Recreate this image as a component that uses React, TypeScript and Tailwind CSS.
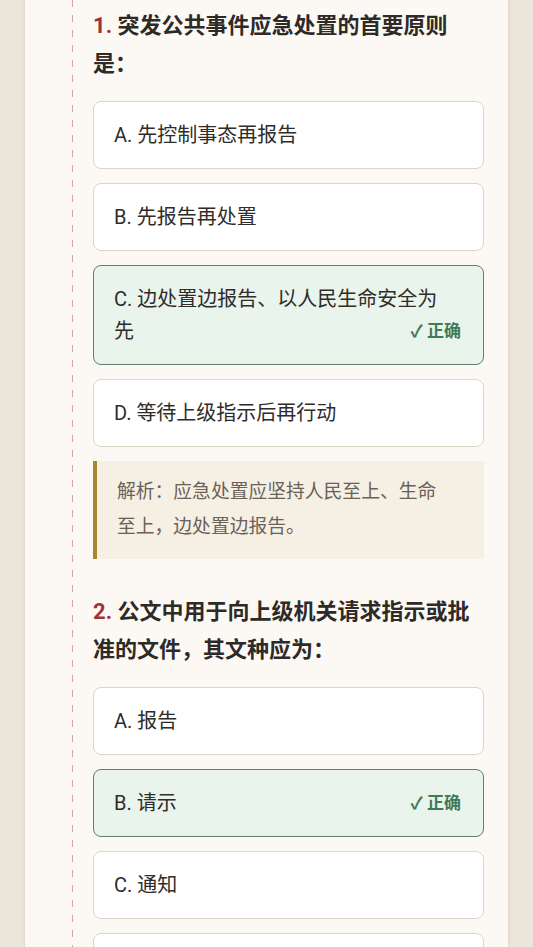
import React from "react";

type Option = { label: string; text: string; correct?: boolean };
type Question = { no: number; title: string; options: Option[]; analysis?: string };

const questions: Question[] = [
  {
    no: 1,
    title: "突发公共事件应急处置的首要原则是：",
    options: [
      { label: "A", text: "先控制事态再报告" },
      { label: "B", text: "先报告再处置" },
      { label: "C", text: "边处置边报告、以人民生命安全为先", correct: true },
      { label: "D", text: "等待上级指示后再行动" },
    ],
    analysis: "解析：应急处置应坚持人民至上、生命至上，边处置边报告。",
  },
  {
    no: 2,
    title: "公文中用于向上级机关请求指示或批准的文件，其文种应为：",
    options: [
      { label: "A", text: "报告" },
      { label: "B", text: "请示", correct: true },
      { label: "C", text: "通知" },
      { label: "D", text: "函" },
    ],
  },
];

const OptionCard: React.FC<{ opt: Option }> = ({ opt }) => (
  <div
    className={
      opt.correct
        ? "relative rounded-lg border border-[#5f8069] bg-[#e9f4ec] py-[17px] pl-[20px] pr-[28px]"
        : "relative rounded-lg border border-[#ddd5c8] bg-white py-[17px] pl-[20px] pr-[28px]"
    }
  >
    <p className="text-[20px] leading-8 text-[#2f2c29]">
      {opt.label}. {opt.text}
    </p>
    {/* correct answer mark, sits on the last line */}
    {opt.correct && (
      <span className="absolute bottom-[17px] right-[22px] text-[17px] font-bold leading-8 text-[#3f7a57]">
        ✓ 正确
      </span>
    )}
  </div>
);

const App: React.FC = () => {
  return (
    <div
      className="h-[947px] overflow-hidden bg-[#ece5d9] px-[25px]"
      style={{ fontFamily: "Roboto, 'Noto Sans CJK SC', sans-serif" }}
    >
      <div className="flex h-full bg-[#fcf9f4] shadow-[0_0_3px_rgba(120,100,70,0.18)]">
        <div className="w-[47px] shrink-0" />
        {/* margin line */}
        <div className="w-px shrink-0 bg-[linear-gradient(to_bottom,#dba2a4_0_7px,transparent_7px_15px)] bg-[length:1px_15px]" />
        <div className="ml-[20px] mr-[24px] flex flex-1 flex-col gap-[34px] pt-[7px]">
          {questions.map((q) => (
            <div key={q.no}>
              <h2 className="mb-[18px] text-[22px] font-bold leading-[38px] text-[#2e2a27]">
                <span className="text-[#a3323a]">{q.no}.</span> {q.title}
              </h2>
              <div className="flex flex-col gap-[14px]">
                {q.options.map((o) => (
                  <OptionCard key={o.label} opt={o} />
                ))}
                {q.analysis && (
                  <div className="border-l-4 border-[#a8872f] bg-[#f5efe4] py-[14px] pl-[20px] pr-[30px] text-[18.8px] leading-[35px] text-[#6a6158]">
                    {q.analysis}
                  </div>
                )}
              </div>
            </div>
          ))}
        </div>
      </div>
    </div>
  );
};

export default App;
